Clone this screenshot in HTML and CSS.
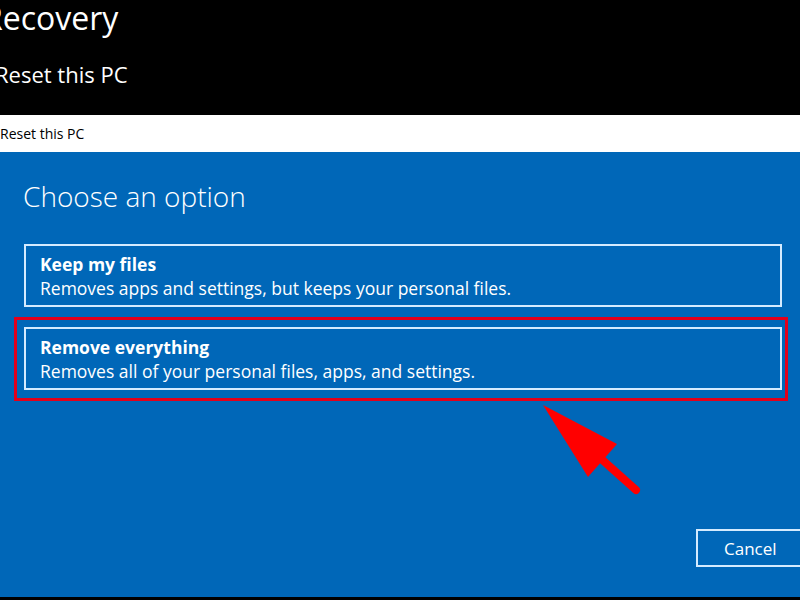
FILE: index.html
```html
<!DOCTYPE html>
<html lang="en">
<head>
<meta charset="utf-8">
<title>Reset this PC</title>
<link rel="stylesheet" href="styles.css">
</head>
<body>
<header class="settings-head">
  <h1 class="settings-title">Recovery</h1>
  <h2 class="settings-sub">Reset this PC</h2>
</header>
<div class="titlebar">Reset this PC</div>
<main class="dialog">
  <h3 class="dialog-heading">Choose an option</h3>
  <div class="options">
    <div class="option">
      <div class="option-title">Keep my files</div>
      <div class="option-desc">Removes apps and settings, but keeps your personal files.</div>
    </div>
    <div class="highlight">
      <div class="option">
        <div class="option-title">Remove everything</div>
        <div class="option-desc">Removes all of your personal files, apps, and settings.</div>
      </div>
    </div>
  </div>
  <div class="actions">
    <button class="btn-cancel">Cancel</button>
  </div>
</main>
<div class="bottom-edge"></div>
<svg class="pointer" width="800" height="600" viewBox="0 0 800 600" aria-hidden="true">
  <line x1="598" y1="456" x2="636" y2="490" stroke="#ff0000" stroke-width="8" stroke-linecap="round"/>
  <polygon points="543,405 617,444 588,477" fill="#ff0000"/>
</svg>
</body>
</html>
```

FILE: styles.css
```css
* { box-sizing: border-box; }
html, body { margin: 0; padding: 0; }
body {
  width: 800px;
  height: 600px;
  overflow: hidden;
  background: #000;
  font-family: "Open Sans", "Noto Sans", "Liberation Sans", sans-serif;
  position: relative;
}
.settings-head {
  height: 115px;
  background: #000;
  color: #fff;
}
.settings-title {
  margin: 0 0 0 -17px;
  font-size: 32px;
  font-weight: 400;
  line-height: 36px;
}
.settings-sub {
  margin: 23px 0 0 -5px;
  font-size: 22px;
  font-weight: 400;
  line-height: 30px;
}
.titlebar {
  height: 37px;
  background: #fff;
  color: #000;
  font-size: 14px;
  line-height: 37px;
  padding-left: 0;
}
.dialog {
  height: 445px;
  background: #0067b8;
  color: #fff;
  padding: 26px 18px 0 24px;
  display: flex;
  flex-direction: column;
}
.dialog-heading {
  margin: 0 0 0 -1px;
  font-size: 28px;
  font-weight: 300;
  line-height: 36px;
}
.options {
  margin-top: 30px;
  display: flex;
  flex-direction: column;
}
.option {
  height: 63px;
  border: 2px solid #d4ebff;
  padding: 7px 14px 0 14px;
}
.option-title {
  font-size: 17.5px;
  font-weight: 700;
  line-height: 23px;
}
.option-desc {
  font-size: 17.5px;
  line-height: 24px;
}
.highlight {
  margin: 10px -6px 0 -10px;
  border: 3px solid #e3001b;
  padding: 7px 3px 8px 7px;
}
.actions {
  margin-top: auto;
  margin-bottom: 30px;
  margin-right: -36px;
  display: flex;
  justify-content: flex-end;
}
.btn-cancel {
  width: 122px;
  height: 38px;
  border: 2px solid #d4ebff;
  background: transparent;
  color: #fff;
  font-family: inherit;
  font-size: 17px;
  text-align: left;
  padding: 0 0 0 26px;
}
.bottom-edge {
  height: 3px;
  background: #000;
}
.pointer {
  position: absolute;
  left: 0;
  top: 0;
  pointer-events: none;
}
```
